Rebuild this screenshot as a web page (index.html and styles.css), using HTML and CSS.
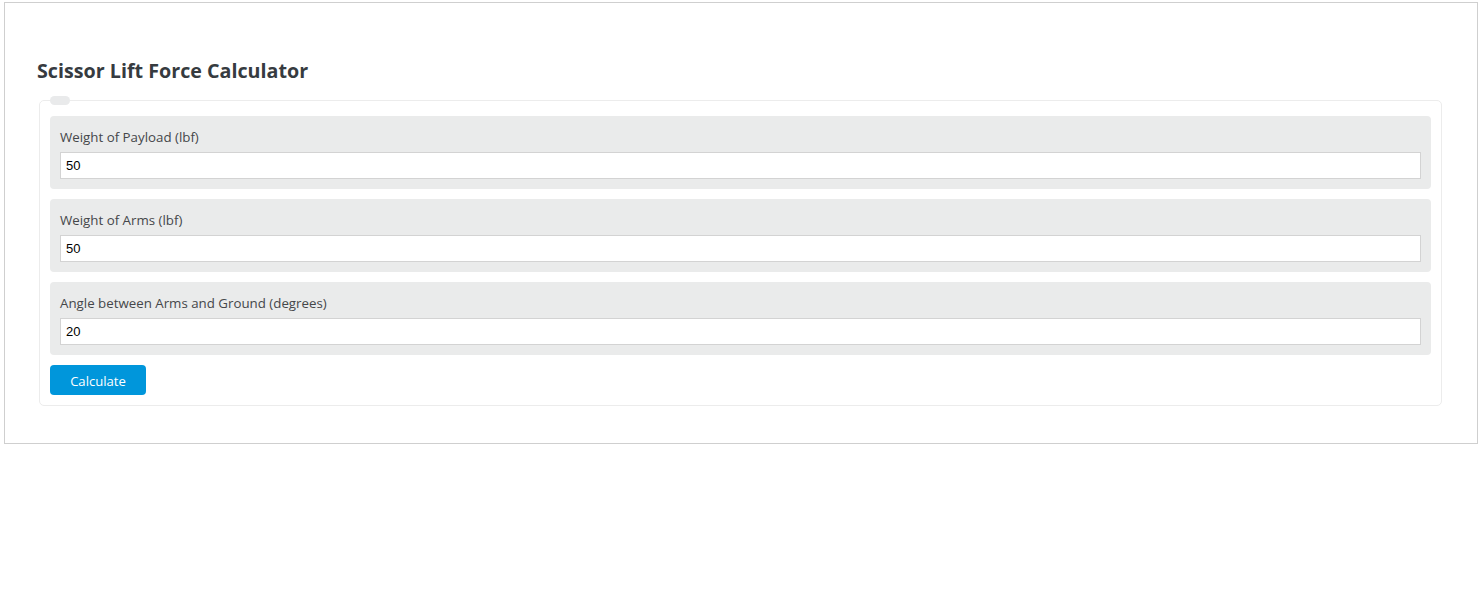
FILE: index.html
```html
<!DOCTYPE html>
<html>
<head>
<meta charset="utf-8">
<link rel="stylesheet" href="styles.css">
</head>
<body>
<div class="calc">
  <h1 class="title">Scissor Lift Force Calculator</h1>
  <fieldset class="box">
    <legend class="pill"></legend>
    <div class="group">
      <label class="label">Weight of Payload (lbf)</label>
      <input class="input" type="text" value="50">
    </div>
    <div class="group">
      <label class="label">Weight of Arms (lbf)</label>
      <input class="input" type="text" value="50">
    </div>
    <div class="group">
      <label class="label">Angle between Arms and Ground (degrees)</label>
      <input class="input" type="text" value="20">
    </div>
    <button class="btn">Calculate</button>
  </fieldset>
</div>
</body>
</html>
```
FILE: styles.css
```css
html, body {
  margin: 0;
  padding: 0;
  background: #fff;
}
.calc {
  margin: 2px 3px 0 4px;
  border: 1px solid #cfcfcf;
  padding: 0 35px 37px 32px;
  font-family: "Open Sans", "Noto Sans", sans-serif;
}
.title {
  margin: 0;
  padding-top: 54px;
  font-size: 19.7px;
  line-height: 28px;
  font-weight: 700;
  color: #363b40;
  margin-bottom: 11px;
}
.box {
  margin: 0 0 0 2px;
  border: 1px solid #ececec;
  border-radius: 5px;
  padding: 10px;
  min-width: 0;
}
.pill {
  width: 20px;
  height: 9px;
  padding: 0;
  margin: 0;
  background: #e9eaeb;
  border-radius: 5px;
}
.group {
  background: #eaebeb;
  border-radius: 4px;
  padding: 10px;
  margin-bottom: 10px;
}
.group:first-of-type {
  margin-top: 1px;
}
.label {
  display: block;
  font-size: 13.3px;
  line-height: 18px;
  color: #45474a;
  padding-top: 2px;
  margin-bottom: 6px;
}
.input {
  display: block;
  box-sizing: border-box;
  width: 100%;
  height: 27px;
  margin: 0;
  border: 1px solid #d3d3d3;
  background: #fff;
  padding: 0 5px;
  font-family: "Liberation Sans", Arial, sans-serif;
  font-size: 13px;
  color: #000;
  outline: none;
}
.btn {
  display: block;
  width: 96px;
  height: 30px;
  background: #0096db;
  color: #fff;
  border: none;
  border-radius: 4px;
  font-family: "Open Sans", "Noto Sans", sans-serif;
  font-size: 13.1px;
  padding: 1px 0 0;
  cursor: pointer;
}
```
